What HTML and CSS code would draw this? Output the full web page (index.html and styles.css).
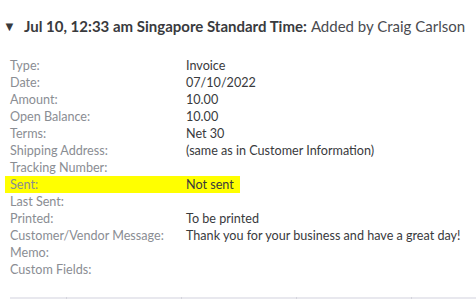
FILE: index.html
```html
<!DOCTYPE html>
<html>
<head>
<meta charset="utf-8">
<link rel="stylesheet" href="styles.css">
</head>
<body>
<div class="entry">
  <div class="entry-head">
    <span class="caret">&#9660;</span>
    <span class="stamp">Jul 10, 12:33 am Singapore Standard Time:</span>
    <span class="action">Added by Craig Carlson</span>
  </div>
  <div class="details">
    <div class="row"><span class="label">Type:</span><span class="value">Invoice</span></div>
    <div class="row"><span class="label">Date:</span><span class="value">07/10/2022</span></div>
    <div class="row"><span class="label">Amount:</span><span class="value">10.00</span></div>
    <div class="row"><span class="label">Open Balance:</span><span class="value">10.00</span></div>
    <div class="row"><span class="label">Terms:</span><span class="value">Net 30</span></div>
    <div class="row"><span class="label">Shipping Address:</span><span class="value">(same as in Customer Information)</span></div>
    <div class="row"><span class="label">Tracking Number:</span><span class="value"></span></div>
    <div class="row highlight"><span class="label">Sent:</span><span class="value">Not sent</span></div>
    <div class="row"><span class="label">Last Sent:</span><span class="value"></span></div>
    <div class="row"><span class="label">Printed:</span><span class="value">To be printed</span></div>
    <div class="row"><span class="label">Customer/Vendor Message:</span><span class="value">Thank you for your business and have a great day!</span></div>
    <div class="row"><span class="label">Memo:</span><span class="value"></span></div>
    <div class="row"><span class="label">Custom Fields:</span><span class="value"></span></div>
  </div>
  <div class="table-head">
    <div class="th th-a"></div>
    <div class="th th-b"></div>
    <div class="th th-b"></div>
    <div class="th th-b"></div>
    <div class="th th-c"></div>
  </div>
</div>
</body>
</html>
```
FILE: styles.css
```css
html, body {
  margin: 0;
  padding: 0;
  background: #ffffff;
}
body {
  font-family: "Lato", "Open Sans", sans-serif;
  width: 476px;
  height: 299px;
  overflow: hidden;
}
.entry-head {
  display: flex;
  align-items: center;
  height: 20px;
  margin-top: 16px;
  padding-left: 3px;
  font-size: 15px;
  color: #393a3d;
  white-space: nowrap;
}
.caret {
  font-size: 13px;
  width: 21px;
  color: #393a3d;
}
.stamp {
  font-weight: 700;
  margin-right: 4px;
}
.action {
  color: #4a4b50;
}
.details {
  margin-top: 21px;
  padding-left: 10px;
  font-size: 12.6px;
  line-height: 17px;
}
.row {
  display: flex;
  width: fit-content;
}
.label {
  width: 176px;
  color: #8a8d93;
}
.value {
  color: #393a3d;
  white-space: nowrap;
}
.highlight {
  background: #ffff00;
  margin-left: -5px;
  padding-left: 5px;
  padding-right: 6px;
}
.table-head {
  display: flex;
  margin-top: 19px;
  margin-left: 10px;
  height: 6px;
  background: #e8e8ee;
}
.th {
  border-right: 1px solid #d4d4dc;
}
.th-a { width: 56px; }
.th-b { width: 114px; }
.th-c { flex: 1; border-right: none; }
```
